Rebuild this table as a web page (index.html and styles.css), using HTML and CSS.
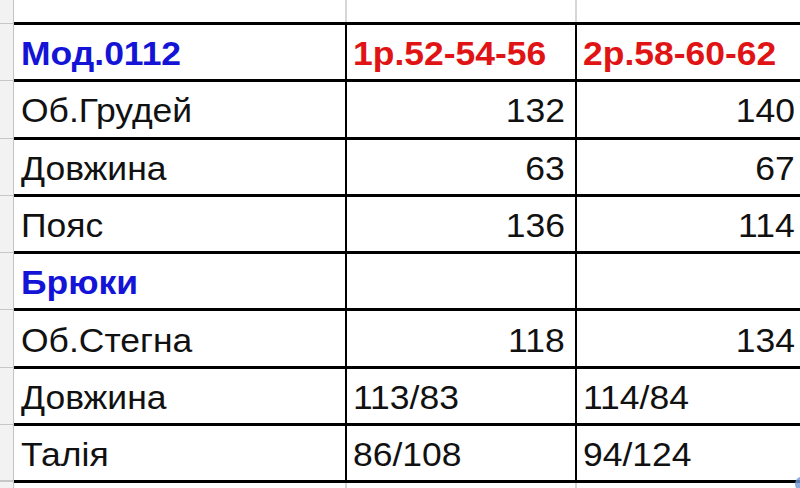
FILE: index.html
```html
<!DOCTYPE html>
<html lang="uk">
<head>
<meta charset="utf-8">
<title>Мод.0112</title>
<link rel="stylesheet" href="styles.css">
</head>
<body>
<div class="sheet">
  <div class="row row-top">
    <div class="gut"></div>
    <div class="cell a blank"></div>
    <div class="cell b blank"></div>
    <div class="cell c blank"></div>
  </div>
  <div class="row">
    <div class="gut"></div>
    <div class="cell a title"><span class="t">Мод.0112</span></div>
    <div class="cell b size"><span class="t">1р.52-54-56</span></div>
    <div class="cell c size"><span class="t">2р.58-60-62</span></div>
  </div>
  <div class="row">
    <div class="gut"></div>
    <div class="cell a"><span class="t">Об.Грудей</span></div>
    <div class="cell b num"><span class="t">132</span></div>
    <div class="cell c num"><span class="t">140</span></div>
  </div>
  <div class="row">
    <div class="gut"></div>
    <div class="cell a"><span class="t">Довжина</span></div>
    <div class="cell b num"><span class="t">63</span></div>
    <div class="cell c num"><span class="t">67</span></div>
  </div>
  <div class="row">
    <div class="gut"></div>
    <div class="cell a"><span class="t">Пояс</span></div>
    <div class="cell b num"><span class="t">136</span></div>
    <div class="cell c num"><span class="t">114</span></div>
  </div>
  <div class="row">
    <div class="gut"></div>
    <div class="cell a title"><span class="t">Брюки</span></div>
    <div class="cell b"></div>
    <div class="cell c"></div>
  </div>
  <div class="row">
    <div class="gut"></div>
    <div class="cell a"><span class="t">Об.Стегна</span></div>
    <div class="cell b num"><span class="t">118</span></div>
    <div class="cell c num"><span class="t">134</span></div>
  </div>
  <div class="row">
    <div class="gut"></div>
    <div class="cell a"><span class="t">Довжина</span></div>
    <div class="cell b"><span class="t">113/83</span></div>
    <div class="cell c"><span class="t">114/84</span></div>
  </div>
  <div class="row row-last">
    <div class="gut"></div>
    <div class="cell a"><span class="t">Талія</span></div>
    <div class="cell b"><span class="t">86/108</span></div>
    <div class="cell c"><span class="t">94/124</span></div>
  </div>
  <div class="row row-tail">
    <div class="gut"></div>
    <div class="cell a blank"></div>
    <div class="cell b blank"></div>
    <div class="cell c blank"></div>
  </div>
  <div class="handle"></div>
</div>
</body>
</html>
```

FILE: styles.css
```css
html, body {
  margin: 0;
  padding: 0;
  background: #ffffff;
  overflow: hidden;
}

.sheet {
  position: relative;
  width: 820px;
  height: 488px;
  overflow: hidden;
  font-family: "Liberation Sans", Arial, sans-serif;
  font-size: 33px;
  color: #111111;
}

.row {
  display: flex;
  height: 57.3px;
}

.gut {
  box-sizing: border-box;
  width: 14px;
  flex: none;
  background: linear-gradient(to bottom, #f2f2f2 0, #f2f2f2 1px, #c6c6c6 1px, #c6c6c6 2px, #f2f2f2 2px);
  border-right: 1px solid #c4c4c4;
}

.cell {
  box-sizing: border-box;
  flex: none;
  display: flex;
  align-items: center;
  padding: 4px 10px 0 7px;
  border-top: 3px solid #000000;
  border-right: 2px solid #000000;
  white-space: nowrap;
  line-height: 38px;
}

.t {
  display: inline-block;
  transform: scaleX(1.075);
  transform-origin: left center;
}

.num .t { transform-origin: right center; }

.a { width: 333px; }
.b { width: 230px; padding-left: 6px; }
.c { width: 230px; padding-left: 6px; }

.num { justify-content: flex-end; }

.title {
  color: #1414d6;
  font-weight: bold;
}

.size {
  color: #e01414;
  font-weight: bold;
}

.row-top { height: 22px; }
.row-top .gut { background: #f2f2f2; }

.blank {
  border-top: none;
  border-right: 2px solid #d6d6d6;
}

.row-last { height: 60.3px; }
.row-last .cell { border-bottom: 3px solid #000000; }
.row-last .gut {
  background: linear-gradient(to bottom, #f2f2f2 0, #f2f2f2 1px, #c6c6c6 1px, #c6c6c6 2px, #f2f2f2 2px, #f2f2f2 57.3px, #c6c6c6 57.3px, #c6c6c6 59px, #f2f2f2 59px);
}

.row-tail { height: 10px; }
.row-tail .gut { background: #f2f2f2; }

.handle {
  position: absolute;
  left: 795px;
  top: 477px;
  width: 12px;
  height: 14px;
  border-radius: 50%;
  background: #6f9ad8;
  opacity: 0.8;
}
```
